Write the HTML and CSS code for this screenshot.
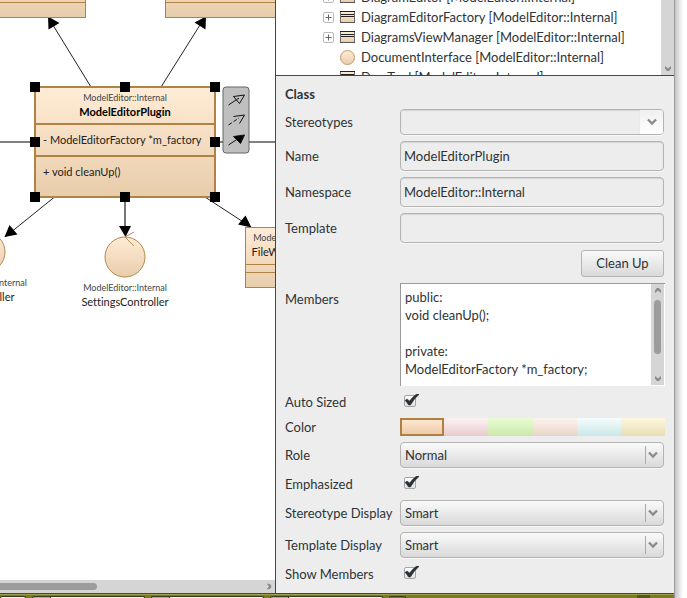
FILE: index.html
```html
<!DOCTYPE html>
<html lang="en">
<head>
<meta charset="utf-8">
<title>Model Editor</title>
<link rel="stylesheet" href="styles.css">
</head>
<body>
<svg class="defs" aria-hidden="true">
  <defs>
    <linearGradient id="skin" x1="0" y1="0" x2="0" y2="1"><stop offset="0" stop-color="#ffecd6"/><stop offset="1" stop-color="#e8cdab"/></linearGradient>
    <symbol id="chevron" viewBox="0 0 10 8"><path d="M1 1.500 5 5.500 9 1.500" fill="none" stroke="#8b8b89" stroke-width="2.400"/></symbol>
    <symbol id="small-chevron" viewBox="0 0 6 5"><path d="M0 0V2.500L2 5H4L6 2.500V0L3 2.500z" fill="#8b8b89"/></symbol>
    <symbol id="tick" viewBox="0 0 15 12"><path d="M1 6.500 3 5 5.500 7Q9 2.500 12.500 0H15.500Q10 4.500 6.500 11H4.500Q3 8.500 1 6.500z" fill="#2b3235" stroke="#2b3235" stroke-width=".5"/></symbol>
    <symbol id="expand" viewBox="0 0 11 11"><rect x=".5" y=".5" width="10" height="10" rx="1.500" fill="#fff" stroke="#b9b9b9"/><path d="M2.500 5.500h6M5.500 2.500v6" stroke="#666"/></symbol>
    <symbol id="class-icon" viewBox="0 0 15 12"><rect x=".5" y=".5" width="14" height="11" fill="url(#skin)" stroke="#6d6a66"/><path d="M0 .5h15M1 3.500h13M1 5.500h13" stroke="#222"/><path d="M0 11.500h15" stroke="#555"/></symbol>
    <symbol id="interface-icon" viewBox="0 0 15 15"><circle cx="7.500" cy="7.500" r="7" fill="url(#skin)" stroke="#c49a66"/></symbol>
  </defs>
</svg>
<div class="window">
  <main class="workspace">
    <section class="diagram-pane">
      <div class="canvas">
        <svg class="edges" width="276" height="580" viewBox="0 0 276 580" aria-hidden="true">
          <path d="M0 142h276" stroke="#808080" stroke-width="2"/>
          <path d="M125 197v30" stroke="#777" stroke-width="2"/>
          <path d="M91 87 48 17M161 87 205 17M57 195 5 237M205 197 251 227" stroke="#222" fill="none"/>
          <path d="M48 16.500 59.500 23 48.500 29.500zM206 16.500 194.500 22.500 205.500 29.500zM4.500 237 9.500 225 17.500 234.500zM119 226h12L125.500 237zM251.500 227.500 238 224.500 245.500 215.500z"/>
        </svg>
        <div class="node top-left"></div>
        <div class="node top-right"></div>
        <div class="node selected">
          <div class="head"><span class="scope">ModelEditor::Internal</span><strong>ModelEditorPlugin</strong></div>
          <div class="attribute">- ModelEditorFactory *m_factory</div>
          <div class="operation">+ void cleanUp()</div>
        </div>
        <svg class="overlay" width="276" height="580" viewBox="0 0 276 580" aria-hidden="true">
          <path d="M30 82h10v10H30zM120 82h10v10H120zM210 82h10v10H210zM30 137h10v10H30zM210 137h10v10H210zM30 192h10v10H30zM120 192h10v10H120zM210 192h10v10H210z"/>
          <g fill="url(#skin)" stroke="#b5894f"><circle cx="125" cy="257" r="20"/><circle cx="-15" cy="252" r="20"/><path d="M134 232 125 237 134 246" fill="none"/></g>
          <rect x="223" y="87" width="26" height="66" rx="3" fill="#bfbfbf" stroke="#666"/>
          <g fill="none" stroke="#111">
            <path d="M228.500 105 239 98M233.500 96.500 244.500 95 239.500 103.500z"/>
            <path d="M228.500 125 239 118" stroke-dasharray="4 2"/><path d="M233.500 116.500 244.500 115 239.500 123.500"/>
            <path d="M228.500 145 239 138"/><path d="M233.500 136.500 244.500 135 240.500 143.500z" fill="#000"/>
          </g>
        </svg>
        <div class="caption settings"><span class="scope">ModelEditor::Internal</span><span>SettingsController</span></div>
        <div class="caption neighbour"><span class="scope">ModelEditor::Internal</span><span>UiController</span></div>
        <div class="node file"><div class="head"><span class="scope">ModelEditor::Internal</span><span>FileWizardFactory</span></div><div class="empty"></div></div>
      </div>
      <div class="hscroll"><span class="thumb"></span><svg class="right-arrow" width="6" height="5"><use href="#small-chevron"/></svg></div>
    </section>
    <section class="side">
      <div class="tree">
        <ul>
          <li><svg width="11" height="11"><use href="#expand"/></svg><svg width="15" height="12"><use href="#class-icon"/></svg><span>DiagramEditor [ModelEditor::Internal]</span></li>
          <li><svg width="11" height="11"><use href="#expand"/></svg><svg width="15" height="12"><use href="#class-icon"/></svg><span>DiagramEditorFactory [ModelEditor::Internal]</span></li>
          <li><svg width="11" height="11"><use href="#expand"/></svg><svg width="15" height="12"><use href="#class-icon"/></svg><span>DiagramsViewManager [ModelEditor::Internal]</span></li>
          <li><i></i><svg width="15" height="15"><use href="#interface-icon"/></svg><span>DocumentInterface [ModelEditor::Internal]</span></li>
          <li><i></i><svg width="15" height="12"><use href="#class-icon"/></svg><span>DragTool [ModelEditor::Internal]</span></li>
        </ul>
        <div class="vscroll"><svg width="6" height="5"><use href="#small-chevron"/></svg></div>
      </div>
      <form class="properties">
        <h2>Class</h2>
        <label for="stereotypes">Stereotypes</label>
        <div class="combo editable"><input id="stereotypes" type="text"><button type="button" aria-label="Show stereotypes"><svg width="10" height="8"><use href="#chevron"/></svg></button></div>
        <label for="name">Name</label>
        <input class="field" id="name" type="text" value="ModelEditorPlugin">
        <label for="namespace">Namespace</label>
        <input class="field" id="namespace" type="text" value="ModelEditor::Internal">
        <label for="template">Template</label>
        <input class="field" id="template" type="text">
        <button class="clean" type="button">Clean Up</button>
        <label class="members-label" for="members">Members</label>
        <div class="members">
          <textarea id="members" spellcheck="false">public:
void cleanUp();

private:
ModelEditorFactory *m_factory;</textarea>
          <div class="vscroll full"><svg class="up" width="6" height="5"><use href="#small-chevron"/></svg><span class="thumb"></span><svg width="6" height="5"><use href="#small-chevron"/></svg></div>
        </div>
        <label for="auto">Auto Sized</label>
        <div class="check"><input id="auto" type="checkbox" checked><svg width="15" height="12"><use href="#tick"/></svg></div>
        <span id="color-label">Color</span>
        <div class="colors" role="radiogroup" aria-labelledby="color-label">
          <input class="peach" type="radio" name="color" aria-label="Peach" checked>
          <input class="pink" type="radio" name="color" aria-label="Pink">
          <input class="green" type="radio" name="color" aria-label="Green">
          <input class="tan" type="radio" name="color" aria-label="Tan">
          <input class="cyan" type="radio" name="color" aria-label="Cyan">
          <input class="yellow" type="radio" name="color" aria-label="Yellow">
        </div>
        <label for="role">Role</label>
        <div class="combo"><select id="role"><option>Normal</option></select><svg width="10" height="8"><use href="#chevron"/></svg></div>
        <label for="emphasized">Emphasized</label>
        <div class="check"><input id="emphasized" type="checkbox" checked><svg width="15" height="12"><use href="#tick"/></svg></div>
        <label for="stereotype-display">Stereotype Display</label>
        <div class="combo"><select id="stereotype-display"><option>Smart</option></select><svg width="10" height="8"><use href="#chevron"/></svg></div>
        <label for="template-display">Template Display</label>
        <div class="combo"><select id="template-display"><option>Smart</option></select><svg width="10" height="8"><use href="#chevron"/></svg></div>
        <label for="show-members">Show Members</label>
        <div class="check"><input id="show-members" type="checkbox" checked><svg width="15" height="12"><use href="#tick"/></svg></div>
      </form>
    </section>
  </main>
  <footer class="output-bar"><i class="tab first"></i><i class="tab"></i><i class="tab"></i><i class="tab"></i><i class="tab last"></i><i class="toggle"></i></footer>
</div>
</body>
</html>
```
FILE: styles.css
```css
* { box-sizing: border-box; }
body {
  margin: 0;
  background: linear-gradient(to left, #fff 0, #fff 4px, #c4c4c4 12px);
  color: #2e3436;
  font: 13px/18px Lato, "Noto Sans", sans-serif;
  font-variant-ligatures: none;
}
input, select, textarea, button { font: inherit; color: inherit; margin: 0; font-variant-ligatures: none; }
svg { display: block; flex: none; }
.defs { position: absolute; width: 0; height: 0; }

.window {
  display: flex;
  flex-direction: column;
  height: 100vh;
  margin-right: 12px;
  overflow: hidden;
  border-right: 1px solid #999;
  background: #ededed;
}
.workspace { flex: 1; min-height: 0; display: flex; }
.diagram-pane { flex: 0 0 275px; display: flex; flex-direction: column; background: #fff; }
.canvas { position: relative; flex: 1; overflow: hidden; font-size: 11px; line-height: 14px; color: #222; }
.edges, .overlay { position: absolute; left: 0; top: 0; }
.node {
  position: absolute;
  border: 1px solid #b08344;
  background: linear-gradient(#ffecd6, #e8cdab);
  white-space: nowrap;
}
.top-left { left: -60px; top: -60px; width: 146px; height: 78px; }
.top-right { left: 165px; top: -60px; width: 146px; height: 78px; }
.top-left::after, .top-right::after { content: ""; display: block; margin-top: 61px; border-top: 1px solid #b08344; }
.selected { left: 34px; top: 86px; width: 182px; height: 112px; border-width: 2px; }
.head { display: flex; flex-direction: column; align-items: center; }
.scope { font-size: 9px; color: #444; }
.selected .head { height: 35px; padding-top: 3px; color: #000; }
.attribute, .operation { border-top: 2px solid #b08344; padding: 0 7px; line-height: 30px; }
.attribute { height: 32px; }
.caption { position: absolute; width: 140px; display: flex; flex-direction: column; align-items: center; }
.settings { left: 55px; top: 281px; }
.neighbour { left: -85px; top: 276px; }
.file { left: 245px; top: 227px; width: 100px; height: 61px; }
.file .head { height: 36px; padding-top: 3px; }
.empty { height: 9px; border: solid #b08344; border-width: 1px 0; }

.hscroll { flex: 0 0 13px; display: flex; align-items: center; justify-content: space-between; padding-right: 3px; background: #d5d5d5; }
.hscroll .thumb { width: 97px; height: 7px; border-radius: 0 4px 4px 0; background: #9b9c9e; }
.right-arrow { transform: rotate(-90deg); }

.side { flex: 1; min-width: 0; border-left: 1px solid #4b4a22; }
.tree { display: flex; height: 76px; overflow: hidden; background: #fff; border-bottom: 1px solid #4b4a22; }
.tree ul { flex: 1; min-width: 0; list-style: none; margin: -13px 0 0; padding: 0 0 0 47px; white-space: nowrap; }
.tree li { display: flex; align-items: center; height: 20px; }
.tree li > :first-child { width: 11px; margin-right: 6px; }
.tree li span { margin-left: 6px; }
.vscroll { width: 13px; display: flex; flex-direction: column; align-items: center; justify-content: flex-end; padding: 4px 0; background: #d5d5d5; }
.full { gap: 7px; }
.full .thumb { flex: 1; width: 7px; margin-bottom: 15px; border-radius: 4px; background: #9b9c9e; }
.up { transform: rotate(180deg); }

.properties {
  display: grid;
  grid-template-columns: 109px 1fr;
  grid-template-rows: 19px 26px 30px 30px 30px 28px 103px 20px 18px 26px 20px 26px 26px 20px;
  gap: 6px;
  align-items: center;
  padding: 8px 10px 8px 9px;
  white-space: nowrap;
}
h2 { grid-column: 1 / -1; margin: 0; font-size: 13px; line-height: 18px; }
.field, .combo { width: 100%; border: 1px solid #b4b4b2; border-radius: 4px; box-shadow: 0 1px 0 #f8f8f8; }
.field { height: 100%; padding: 0 3px; background: #ededed; box-shadow: inset 0 1px 1px #d3d3d3, 0 1px 0 #f8f8f8; }
.combo { position: relative; height: 100%; display: flex; background: linear-gradient(#fafafa, #d9d9d9); }
.combo select { appearance: none; flex: 1; min-width: 0; padding: 0 4px; border: 0; background: none; }
.combo > svg { position: absolute; right: 5px; top: 8px; }
.combo:not(.editable)::after { content: ""; position: absolute; right: 17px; top: 3px; bottom: 3px; border-left: 1px solid #aaa; }
.editable { overflow: hidden; background: #ededed; }
.editable input { flex: 1; min-width: 0; padding: 0 3px; border: 0; background: none; box-shadow: inset 0 1px 1px #d3d3d3; }
.editable button { width: 23px; display: grid; place-items: center; padding: 0; border: 0; background: linear-gradient(#f0f0f0, #fff); }
.clean { grid-column: 2; justify-self: end; width: 83px; height: 27px; padding: 0; border: 1px solid #b4b4b2; border-radius: 3px; background: linear-gradient(#fafafa, #d9d9d9); }
.members-label { align-self: start; margin-top: 7px; }
.members { display: flex; height: 100%; margin-right: -1px; border: solid #999; border-width: 1px 0 0 1px; padding: 0 1px 1px 0; background: #fff; }
.members textarea { flex: 1; min-width: 0; resize: none; overflow: hidden; border: 0; padding: 4px; background: none; }
.check { position: relative; height: 14px; margin-left: 4px; }
.check input { appearance: none; display: block; width: 12px; height: 12px; border: 1px solid #a5a5a5; border-radius: 2px; background: linear-gradient(#fff, #e2e2e2); }
.check svg { position: absolute; left: 0; top: -1px; }
.colors { display: grid; grid-template-columns: repeat(6, 1fr); height: 18px; margin-right: -1px; }
.colors input { appearance: none; min-width: 0; }
.peach { background: linear-gradient(#ffe8d0, #ebcba9); }
.peach:checked { border: 2px solid #b08040; }
.pink { background: linear-gradient(#fdf3f4, #e8cace); }
.green { background: linear-gradient(#e9fdd5, #cbe8a9); }
.tan { background: linear-gradient(#fdf4ee, #e8d5c8); }
.cyan { background: linear-gradient(#f5fdfd, #cae7e8); }
.yellow { background: linear-gradient(#fdf7de, #e8deb4); }

.output-bar { flex: 0 0 5px; display: flex; align-items: flex-end; gap: 6px; border-top: 1px solid #4b4a22; background: #7b7a24; box-shadow: inset 0 1px 0 #a09f4c; }
.tab { width: 113px; height: 2px; border: solid #3d3d1d; border-width: 1px 1px 0; border-radius: 3px 3px 0 0; background: linear-gradient(to right, #aaa 17px, #333 17px, #333 18px, #eee 18px); }
.first { width: 26px; background: #eee; }
.last { width: 17px; background: #777638; }
.toggle { width: 13px; height: 3px; margin-left: auto; margin-right: 24px; background: #55551f; }
```
